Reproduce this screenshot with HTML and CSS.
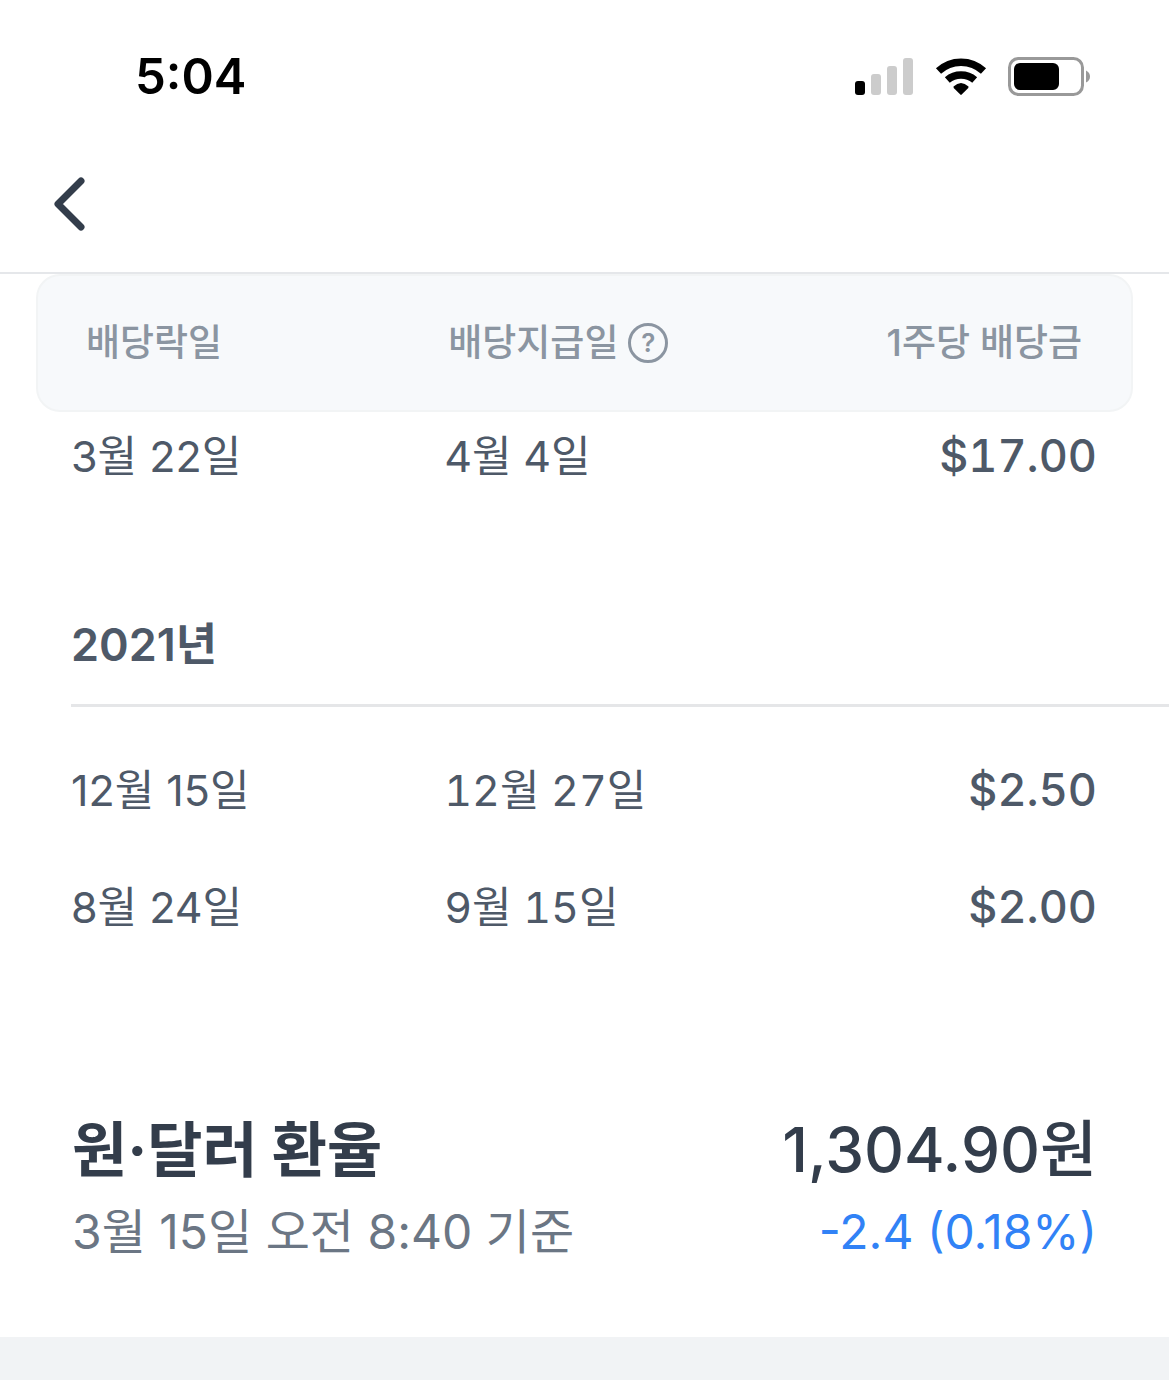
FILE: index.html
```html
<!DOCTYPE html>
<html lang="ko">
<head>
<meta charset="utf-8">
<meta name="viewport" content="width=device-width, initial-scale=1">
<title>배당금</title>
<link rel="stylesheet" href="styles.css">
</head>
<body>
<header class="top">
  <div class="status">
    <time class="clock">5:04</time>
    <div class="indicators">
      <svg class="signal" width="60" height="40" viewBox="0 0 60 40" aria-hidden="true">
        <rect x="1" y="24" width="10" height="14" rx="3" fill="#000"/>
        <g fill="#ccc"><rect x="17" y="17" width="10" height="21" rx="3"/><rect x="33" y="9" width="10" height="29" rx="3"/><rect x="49" y="1" width="10" height="37" rx="3"/></g>
      </svg>
      <svg class="wifi" width="52" height="40" viewBox="0 0 52 40" aria-hidden="true">
        <path d="M3.500 14A33 33 0 0 1 48.500 14M12.300 23A21 21 0 0 1 39.700 23" fill="none" stroke="#000" stroke-width="7.500"/>
        <path d="M18.500 29.500Q26 22.500 33.500 29.500L33.300 31 26.700 37.600Q26 38.200 25.300 37.600L18.700 31z"/>
      </svg>
      <svg class="battery" width="82" height="40" viewBox="0 0 82 40" aria-hidden="true">
        <rect x="1.500" y="1.500" width="73" height="36" rx="9" fill="none" stroke="#999" stroke-width="3"/>
        <rect x="6" y="6" width="45" height="27" rx="6"/>
        <path d="M78 13.500q4 2 4 6t-4 6z" fill="#999"/>
      </svg>
    </div>
  </div>
  <nav class="nav">
    <button class="back" type="button" aria-label="뒤로">
      <svg width="34" height="56" viewBox="0 0 34 56" aria-hidden="true"><path d="M29 5L6 28l23 23" fill="none" stroke="#333d4b" stroke-width="7" stroke-linecap="round" stroke-linejoin="round"/></svg>
    </button>
  </nav>
</header>
<main>
  <table class="dividends">
    <colgroup><col class="col-ex"><col class="col-pay"><col class="col-amount"></colgroup>
    <thead>
      <tr>
        <th scope="col"><div class="head head-start">배당락일</div></th>
        <th scope="col"><div class="head head-mid">배당지급일<button class="help" type="button" aria-label="도움말">?</button></div></th>
        <th scope="col"><div class="head head-end">1주당 배당금</div></th>
      </tr>
    </thead>
    <tbody>
      <tr class="first"><td>3월 22일</td><td class="paid">4월 4일</td><td class="amount">$17.00</td></tr>
    </tbody>
    <tbody>
      <tr class="year"><th colspan="3" scope="rowgroup"><div class="year-label">2021년</div></th></tr>
      <tr><td>12월 15일</td><td class="paid">12월 27일</td><td class="amount">$2.50</td></tr>
      <tr><td>8월 24일</td><td class="paid">9월 15일</td><td class="amount">$2.00</td></tr>
    </tbody>
  </table>
  <section class="rate">
    <div class="rate-line"><h2>원·달러 환율</h2><strong>1,304.90원</strong></div>
    <div class="rate-line sub"><span>3월 15일 오전 8:40 기준</span><span class="change">-2.4 (0.18%)</span></div>
  </section>
</main>
<div class="divider"></div>
</body>
</html>
```
FILE: styles.css
```css
* { box-sizing: border-box; }
body { display: flex; flex-direction: column; min-height: 100vh; margin: 0; background: #fff; color: #4e5968; font-family: Inter, "Noto Sans CJK KR", sans-serif; }
button { padding: 0; border: 0; background: none; color: inherit; font: inherit; }
.top { border-bottom: 2px solid #e5e7ea; }
.status { display: flex; align-items: center; justify-content: space-between; height: 136px; padding: 18px 79px 0 135px; }
.clock { color: #000; font-size: 49px; font-weight: 600; line-height: 60px; }
.indicators { display: flex; align-items: center; gap: 21px; }
.nav { display: flex; align-items: center; height: 136px; padding: 0 52px; }
.back { display: flex; }

.dividends { width: 100%; border-collapse: collapse; table-layout: fixed; font-size: 43px; line-height: 58px; }
.col-ex { width: 38%; }
.col-pay { width: 32%; }
.dividends th, .dividends td { padding: 0; text-align: left; font-weight: 400; white-space: nowrap; }
.dividends td:first-child { padding-left: 71px; }
.dividends .paid { font-variant-numeric: tabular-nums; }
.dividends .amount { padding-right: 72px; text-align: right; font-size: 45px; font-weight: 500; font-variant-numeric: tabular-nums; }
.dividends tbody tr { height: 117px; }
.dividends .first { height: 88px; }

.head { display: flex; align-items: center; height: 138px; border: solid #f2f4f5; border-width: 2px 0; background: #f7f9fb; color: #8b95a1; font-size: 37px; font-weight: 500; }
.head-start { margin-left: 36px; padding-left: 48px; border-left-width: 2px; border-radius: 24px 0 0 24px; }
.head-mid { gap: 10px; padding-left: 4px; }
.head-end { justify-content: flex-end; margin-right: 36px; padding-right: 49px; border-right-width: 2px; border-radius: 0 24px 24px 0; }
.help { width: 40px; height: 40px; border: 3px solid #8b95a1; border-radius: 50%; font-size: 26px; font-weight: 600; line-height: 34px; }

.dividends .year th { padding: 116px 0 24px 71px; }
.year-label { padding-bottom: 30px; border-bottom: 3px solid #e5e6e8; font-size: 45px; font-weight: 600; }

.rate { padding: 144px 72px 64px; }
.rate-line { display: flex; justify-content: space-between; align-items: center; color: #333d4b; font-size: 62px; line-height: 82px; }
.rate-line h2 { margin: 0; font-size: 60px; font-weight: 700; }
.rate-line strong { font-weight: 500; }
.rate-line.sub { color: #6b7684; font-size: 48px; }
.rate-line .change { color: #3182f6; }
.divider { flex: 1; min-height: 43px; background: #f1f3f5; }
```
